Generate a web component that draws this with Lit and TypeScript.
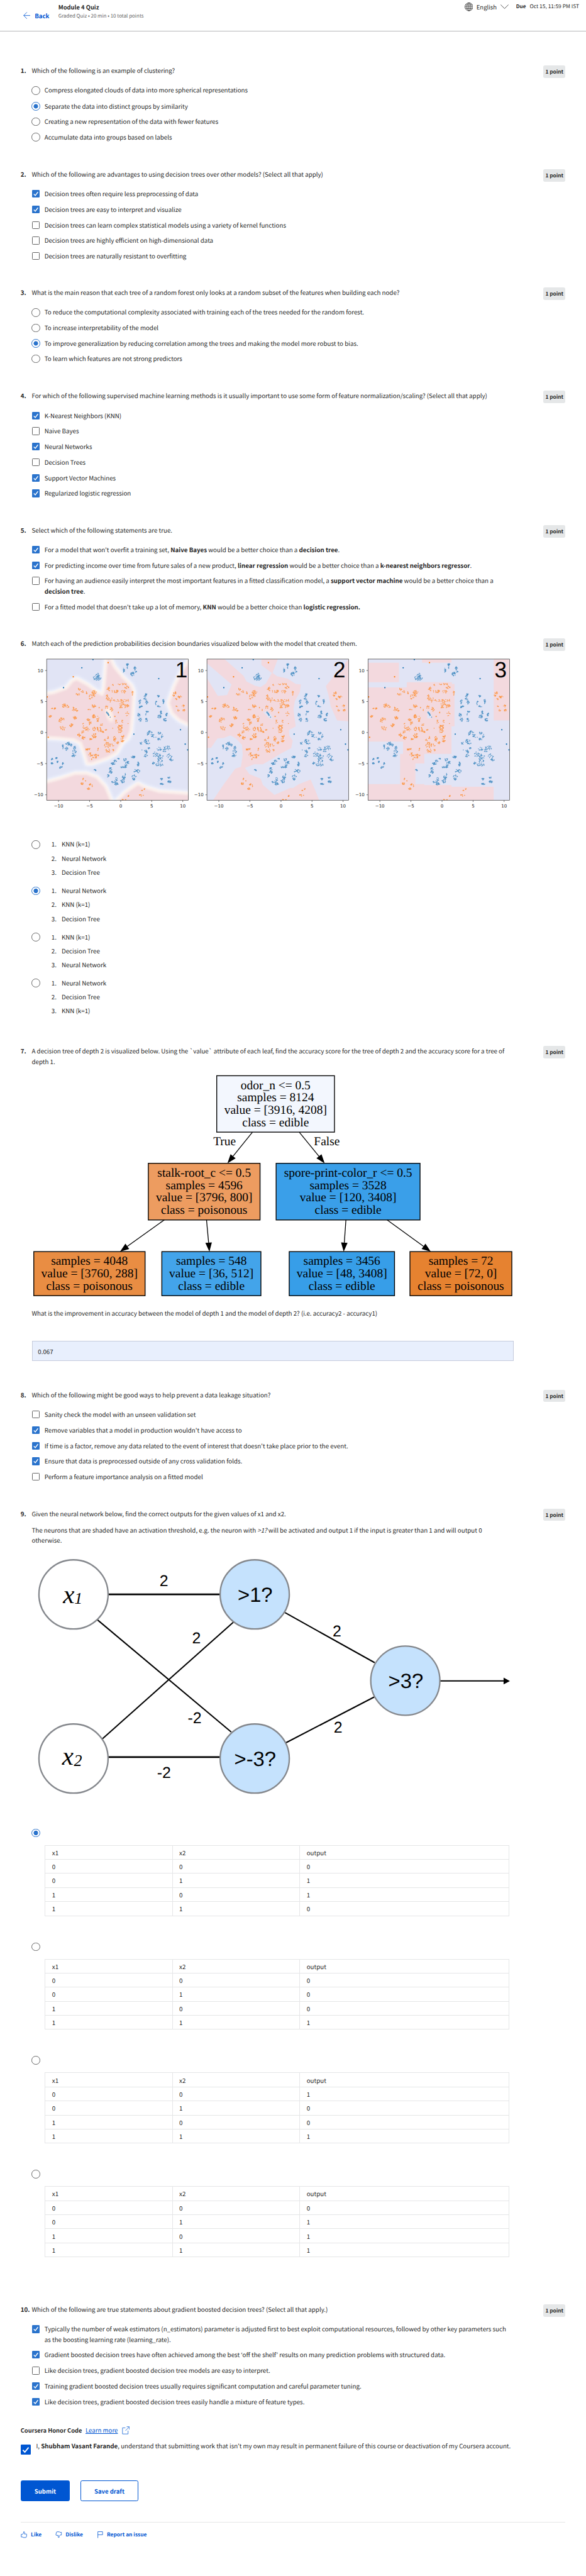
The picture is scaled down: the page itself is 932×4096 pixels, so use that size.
import { LitElement, html, svg, css, TemplateResult } from "lit";
import { customElement } from "lit/decorators.js";

type Cluster = [number, number, number, number, number];
type Body = string | TemplateResult;
interface Option { text: Body; on?: boolean; h?: number }
interface Question { n: number; title: Body; h: number; kind?: "radio" | "check"; options?: Option[]; body?: TemplateResult }

// Scatter clusters: centre x, centre y, radius x, radius y, number of dots.
const ORANGE: Cluster[] = [
  [240,222,8,8,8],[262,238,9,8,7],[232,258,16,8,9],[293,245,5,10,5],[345,245,20,13,22],[330,270,22,14,16],[313,288,8,5,4],
  [448,222,14,16,14],[475,195,4,8,3],[490,235,22,16,18],[550,240,18,10,14],[545,188,35,6,13],[570,208,18,12,14],[612,252,6,17,10],
  [437,280,14,18,16],[460,297,14,16,10],[500,300,25,10,8],[538,315,22,26,26],[570,300,18,10,8],[570,345,18,16,18],[535,347,18,12,10],
  [135,338,14,14,18],[160,343,8,12,8],[58,357,18,6,16],[205,360,18,14,14],[220,372,14,5,8],[340,340,16,11,20],[377,350,5,4,3],
  [310,365,10,6,4],[432,348,12,11,11],[466,360,11,18,12],[401,367,5,8,3],[37,412,10,7,13],[118,435,18,12,18],[103,450,10,10,6],
  [208,422,15,10,20],[342,412,11,13,22],[370,430,9,24,17],[303,435,11,9,11],[318,460,10,15,11],[270,475,7,18,6],[185,475,14,11,18],
  [125,492,20,18,15],[290,500,22,16,20],[262,518,12,13,9],[240,543,13,12,17],[270,562,12,11,15],[345,500,13,13,14],[380,500,17,22,22],
  [400,521,14,6,8],[425,508,8,7,7],[345,548,16,19,22],[310,573,21,6,14],[395,470,10,9,5],[514,390,4,11,3],[575,395,14,15,7],
  [487,413,6,3,3],[500,450,8,17,7],[540,445,5,15,5],[528,490,22,20,28],[580,462,2,2,1],[525,518,17,11,11],[476,497,2,2,1],
  [545,552,11,9,10],[542,578,13,15,13],[487,570,9,18,16],[508,597,9,9,10],[440,560,10,11,7],[420,577,7,9,5],[435,612,20,20,20],
  [465,615,18,15,12],[440,652,17,15,17],[478,645,5,12,5],[300,640,17,6,11],[292,646,9,5,7],[318,680,13,13,13],[350,690,20,20,20],
  [371,650,5,20,6],[375,690,6,7,5],[328,712,4,3,3],[900,262,6,15,11],[913,248,5,9,9],[942,276,14,8,15],[917,293,8,6,8],
  [920,342,6,3,5],[967,338,9,9,11],[971,370,9,7,11],[933,370,7,6,6],[267,850,4,6,9],[260,882,8,9,14],[284,864,2,2,3],
  [316,888,7,7,9],[305,919,9,7,14],[330,900,2,8,4],[584,971,4,8,14],[543,995,5,2,8],[564,995,3,2,6],[667,962,7,3,7],
  [679,930,4,3,6],[696,921,4,3,6],[688,965,2,2,3],[674,971,1,1,2],
];
const BLUE: Cluster[] = [
  [365,140,33,22,30],[372,124,12,18,14],[368,152,16,12,12],[578,52,9,10,18],[577,75,4,8,5],[550,90,8,14,17],[630,76,9,11,15],
  [632,100,10,8,7],[612,115,13,15,28],[706,262,9,9,15],[700,285,11,15,12],[712,316,9,13,15],[665,312,8,17,13],[670,345,13,12,18],
  [793,271,9,6,12],[778,318,7,14,11],[797,342,11,7,9],[828,308,6,16,14],[657,402,9,12,14],[715,380,9,6,12],[705,397,5,5,3],
  [668,435,13,13,17],[710,438,9,12,14],[812,388,7,15,13],[800,415,13,14,18],[852,400,7,12,13],[840,436,11,12,18],[738,522,14,11,14],
  [720,535,9,11,11],[752,545,11,11,14],[800,530,12,9,9],[820,552,9,14,9],[797,572,14,7,9],[770,560,8,8,2],[672,598,8,11,10],
  [710,587,16,15,20],[718,602,15,6,8],[727,633,7,8,10],[708,660,11,13,15],[705,688,13,10,13],[685,650,20,4,3],[800,640,18,12,15],
  [855,632,24,15,22],[775,680,20,20,19],[810,690,19,20,20],[830,655,18,12,9],[870,690,19,19,14],[885,714,14,12,14],[800,722,22,15,18],
  [760,740,9,11,12],[800,752,29,9,22],[163,603,18,13,24],[126,625,6,15,12],[150,640,10,14,15],[183,612,7,10,6],[209,635,10,14,14],
  [203,665,18,14,12],[200,687,16,8,18],[80,705,6,8,14],[50,712,8,6,14],[50,741,8,5,16],[88,731,5,7,13],[126,745,4,12,14],
  [115,765,10,5,9],[104,773,7,3,8],[514,708,6,6,7],[492,725,10,9,11],[476,743,14,8,24],[617,697,14,8,24],[560,715,11,9,12],
  [577,740,15,15,18],[550,768,20,7,24],[565,758,10,8,8],[652,745,7,15,22],[460,780,11,10,13],[460,802,13,12,17],[442,828,8,11,11],
  [650,800,16,14,18],[630,795,9,11,8],[622,830,18,8,9],[622,850,11,8,15],[547,840,15,14,18],[543,862,15,16,22],[562,820,3,8,5],
  [499,853,8,16,10],[480,870,17,8,16],[500,885,14,9,24],[815,851,9,6,12],[818,885,12,5,22],[866,840,9,5,9],[870,870,14,7,20],
  [434,386,5,5,9],[440,394,4,5,9],[447,403,4,5,8],[457,418,2,2,4],[348,786,4,3,6],[355,790,4,3,6],
];

// Deterministic scatter so that every panel shows the same sample.
function scatter(list: Cluster[], seed: number): string {
  let s = seed;
  const rnd = () => ((s = (s * 1664525 + 1013904223) >>> 0) / 4294967296);
  let d = "";
  for (const [cx, cy, rx, ry, n] of list)
    for (let i = 0; i < n; i++) {
      const a = rnd() * Math.PI * 2, r = Math.sqrt(rnd());
      d += `M${(cx + Math.cos(a) * r * rx).toFixed(1)} ${(cy + Math.sin(a) * r * ry).toFixed(1)}h0`;
    }
  return d;
}
const dots = (list: number[][]) => list.map(([x, y]) => `M${x} ${y}h0`).join("");

const NN_MAIN = "M-40 262L60 248 150 215 190 165 222 150 300 192 360 238 400 258 410 240 418 150 426 60 434 -30L440 -30 485 65 545 138 604 195 622 240 612 400 600 520 578 568 540 596 500 668 440 703 330 742 296 742 278 680 250 600 200 575 100 565 -40 558Z";
const NN_BL = "M-40 885L100 848 210 812 290 810 365 840 425 905 485 1050 -40 1050Z";
const NN_BR = "M490 1050L505 1000 560 945 650 882 700 908 800 938 1050 955 1050 1050Z";
const NN_R = "M1050 -30L1000 30 955 100 905 200 864 320 890 390 940 438 1050 490Z";
const NN = `${NN_MAIN} ${NN_BL} ${NN_BR} ${NN_R}`;
const KNN = "M554 228L601 228 628 290 652 345 660 385 683 415 698 424 712 400 728 325 700 270 700 228 744 228 738 270 730 325 742 348 770 365 792 402 806 406 803 460 790 520 786 580 792 700 774 725 775 765 784 800 780 852 752 890 730 925 704 965 680 965 656 990 668 1035 698 1065 704 1110 735 1180 778 1130 785 1132 800 1105 832 1072 845 1150 855 1218 570 1218 598 1110 630 996 645 983 650 900 648 830 632 785 617 762 600 780 582 785 565 850 554 852 554 362 583 486 608 480 620 405 554 258Z M705 600L716 592 728 625 730 652 720 640Z M934 228L930 240 895 345 873 418 880 480 886 560 903 658 934 664Z";
const TREE = "M985 254H1068V390H985Z M1130 228H1209V254H1130Z M985 427H1089V390H1210V402H1217V700H1209V893H1136V960H1112V1104H1136V1111H1209V1123H1322V1218H985V1104H1071V893H1079V807H985Z M1144 594H1152V618H1156V643H1144Z M1322 228H1365V658H1322Z";

const TICKS_X: [string, number][] = [["−10", 95], ["−5", 312], ["0", 530], ["5", 747], ["10", 964]];
const TICKS_Y: [string, number][] = [["10", 92], ["5", 309], ["0", 526], ["−5", 743], ["−10", 961]];

function panel(dx: number, label: string, labelX: number, field: TemplateResult) {
  return svg`<g transform="translate(${105 + dx} 1532) scale(.33333)">
    <g clip-path="url(#frame)">
      <rect x="12" y="12" width="991" height="988" fill="#e1e4f5"></rect>
      ${field}
      <use href="#pts"></use>
    </g>
    <rect x="12" y="12" width="991" height="988" fill="none" stroke="#333" stroke-width="3"></rect>
    ${TICKS_X.map(([t, x]) => svg`<path d="M${x} 1000v11" stroke="#333" stroke-width="3"></path><text class="tick" x=${x} y="1049" text-anchor="middle">${t}</text>`)}
    ${TICKS_Y.map(([t, y]) => svg`<path d="M12 ${y}h-11" stroke="#333" stroke-width="3"></path><text class="tick" x="-12" y=${y + 11} text-anchor="end">${t}</text>`)}
    <text class="digit" x=${labelX} y="140" text-anchor="middle">${label}</text>
  </g>`;
}

const boundaries = html`<svg class="fig plots" viewBox="75 1517 1123 375">
  <defs>
    <clipPath id="frame"><rect x="12" y="12" width="991" height="988"></rect></clipPath>
    <filter id="b1" x="-10%" y="-10%" width="120%" height="120%"><feGaussianBlur stdDeviation="12"></feGaussianBlur></filter>
    <filter id="b2" x="-10%" y="-10%" width="120%" height="120%"><feGaussianBlur stdDeviation="8"></feGaussianBlur></filter>
    <g id="pts" fill="none" stroke-linecap="round">
      <path d=${scatter(ORANGE, 7)} stroke="#ff7f0e" stroke-opacity=".75" stroke-width="6.4"></path>
      <path d=${scatter(BLUE, 11)} stroke="#1f77b4" stroke-opacity=".75" stroke-width="6.4"></path>
      <path d=${dots([[442,37],[198,136],[16,277],[23,559]])} stroke="#ff7f0e" stroke-width="10"></path>
      <path d=${dots([[336,16],[258,73],[130,212],[796,149],[948,506],[622,537],[981,607],[998,647]])} stroke="#1f77b4" stroke-width="10"></path>
    </g>
  </defs>
  ${panel(0, "1", 954, svg`
    <path d=${NN} fill="#f6f8ff" stroke="#f3f7ff" stroke-width="36" filter="url(#b1)"></path>
    <path d=${NN} fill="#fdf1ec" stroke="#fdfaf8" stroke-width="10" filter="url(#b2)"></path>
    <path d=${NN} fill="#f3d9de" stroke="#fbf0ec" stroke-width="20" filter="url(#b2)"></path>
    <ellipse cx="452" cy="402" rx="22" ry="52" fill="#fff3ea" filter="url(#b1)" transform="rotate(-18 452 402)"></ellipse>`)}
  ${panel(373.7, "2", 938, svg`<path transform="translate(12 12) scale(2.608 .998) translate(-554 -228)" d=${KNN} fill="#f3d9de" fill-rule="evenodd"></path>`)}
  ${panel(749.2, "3", 940, svg`<path transform="translate(12 12) scale(2.608 .998) translate(-985 -228)" d=${TREE} fill="#f3d9de" fill-rule="evenodd"></path>`)}
</svg>`;

interface Node { x: number; y: number; w: number; h: number; fill: string; lines: string[] }
const NODES: Node[] = [
  { x: 505.5, y: 2508, w: 274.5, h: 131.5, fill: "#f3f7fe", lines: ["odor_n <= 0.5", "samples = 8124", "value = [3916, 4208]", "class = edible"] },
  { x: 346, y: 2712.2, w: 260.5, h: 132, fill: "#ed9c60", lines: ["stalk-root_c <= 0.5", "samples = 4596", "value = [3796, 800]", "class = poisonous"] },
  { x: 644, y: 2712.2, w: 335.5, h: 132, fill: "#3a9fe9", lines: ["spore-print-color_r <= 0.5", "samples = 3528", "value = [120, 3408]", "class = edible"] },
  { x: 79, y: 2918, w: 259.5, h: 102.7, fill: "#e98d43", lines: ["samples = 4048", "value = [3760, 288]", "class = poisonous"] },
  { x: 377.5, y: 2918, w: 231, h: 102.7, fill: "#43a4ea", lines: ["samples = 548", "value = [36, 512]", "class = edible"] },
  { x: 674.5, y: 2918, w: 245.5, h: 102.7, fill: "#379ee8", lines: ["samples = 3456", "value = [48, 3408]", "class = edible"] },
  { x: 956, y: 2918, w: 237.5, h: 102.7, fill: "#e68230", lines: ["samples = 72", "value = [72, 0]", "class = poisonous"] },
];
const EDGES = [
  [588.9, 2639.5, 530.5, 2712], [697.8, 2639.5, 757.2, 2712], [383.3, 2844, 280, 2918],
  [481.7, 2844, 488.5, 2918], [806.7, 2844, 801.5, 2918], [902.8, 2844, 1004.6, 2918],
];
function edge([x1, y1, x2, y2]: number[]) {
  const l = Math.hypot(x2 - x1, y2 - y1), ux = (x2 - x1) / l, uy = (y2 - y1) / l;
  const bx = x2 - ux * 21, by = y2 - uy * 21;
  return svg`<path d="M${x1} ${y1}L${bx} ${by}" stroke="#000" stroke-width="1.9"></path>
    <path d="M${x2} ${y2}L${bx - uy * 7.6} ${by + ux * 7.6} ${bx + uy * 7.6} ${by - ux * 7.6}Z"></path>`;
}
const decisionTree = html`<svg class="fig tree" viewBox="75 2500 1123 530">
  ${NODES.map(n => svg`<rect x=${n.x} y=${n.y} width=${n.w} height=${n.h} fill=${n.fill} stroke="#000" stroke-width="2"></rect>
    ${n.lines.map((t, i) => svg`<text x=${n.x + n.w / 2} y=${n.y + 31 + i * 28.8} text-anchor="middle">${t}</text>`)}`)}
  ${EDGES.map(edge)}
  <text x="523.8" y="2670.4" text-anchor="middle">True</text>
  <text x="762.3" y="2670.4" text-anchor="middle">False</text>
</svg>`;

const NEURONS: [number, number, string, string][] = [
  [171.6, 3715.6, "#fff", ""], [171.6, 4098.2, "#fff", ""],
  [594.1, 3715.6, "#c5e2fd", ">1?"], [594.1, 4098.2, "#c5e2fd", ">-3?"], [945.2, 3916.6, "#c5e2fd", ">3?"],
];
const WIRES = ["M252.5 3715.4H513", "M252.5 4094.7H513", "M226.5 3774.1L539.3 4036.3", "M238.7 4052.4L544.5 3780.1", "M664.7 3758.1L873.8 3874.7", "M666.4 4061.6L872.9 3954.6", "M1026 3917.3H1176"];
const WEIGHTS: [string, number, number][] = [["2", 382.4, 3696.5], ["2", 458.2, 3830.2], ["2", 785.8, 3814], ["-2", 453.9, 4015.2], ["2", 788.4, 4037.7], ["-2", 382.4, 4143.8]];
const network = html`<svg class="fig net" viewBox="75 3620 1123 570">
  ${WIRES.map((d, i) => svg`<path d=${d} stroke="#000" stroke-width=${i < 2 ? 3.8 : 3}></path>`)}
  <path d="M1189 3917.4L1174.3 3909.6V3925.2Z"></path>
  ${NEURONS.map(([x, y, f, t]) => svg`<circle cx=${x} cy=${y} r="80.6" fill=${f} stroke="#85888d" stroke-width="3.4"></circle>
    ${t ? svg`<text class="gate" x=${x + 1} y=${y + 17.8} text-anchor="middle">${t}</text>` : ""}`)}
  ${WEIGHTS.map(([t, x, y]) => svg`<text class="weight" x=${x} y=${y} text-anchor="middle">${t}</text>`)}
  <text class="var" x="147" y="3735.6">x</text><text class="sub" x="173.5" y="3738">1</text>
  <text class="var" x="145" y="4113">x</text><text class="sub" x="172.5" y="4115.8">2</text>
</svg>`;

const trio = (...names: string[]) => html`<div class="trio">${names.map((t, i) => html`<div><span class="ord">${i + 1}.</span>${t}</div>`)}</div>`;
const [K, N, D] = ["KNN (k=1)", "Neural Network", "Decision Tree"];

const OUTPUTS = [[0, 1, 1, 0], [0, 0, 0, 1], [1, 0, 0, 1], [0, 1, 1, 1]];
const truthTables = html`<div class="tables">${OUTPUTS.map((out, k) => html`
  <div class="tblock"><i class="radio ${k === 0 ? "on" : ""}"></i>
    <div class="table">${["x1", "x2", "output"].map(t => html`<span>${t}</span>`)}
      ${out.map((o, r) => html`<span>${r >> 1}</span><span>${r & 1}</span><span>${o}</span>`)}</div>
  </div>`)}</div>`;

const QUESTIONS: Question[] = [
  { n: 1, h: 241.2, kind: "radio", title: "Which of the following is an example of clustering?", options: [
    { text: "Compress elongated clouds of data into more spherical representations", h: 37 },
    { text: "Separate the data into distinct groups by similarity", on: true },
    { text: "Creating a new representation of the data with fewer features" },
    { text: "Accumulate data into groups based on labels" }] },
  { n: 2, h: 276.3, kind: "check", title: "Which of the following are advantages to using decision trees over other models? (Select all that apply)", options: [
    { text: "Decision trees often require less preprocessing of data", on: true, h: 37 },
    { text: "Decision trees are easy to interpret and visualize", on: true },
    { text: "Decision trees can learn complex statistical models using a variety of kernel functions" },
    { text: "Decision trees are highly efficient on high-dimensional data", h: 35.6 },
    { text: "Decision trees are naturally resistant to overfitting" }] },
  { n: 3, h: 240.7, kind: "radio", title: "What is the main reason that each tree of a random forest only looks at a random subset of the features when building each node?", options: [
    { text: "To reduce the computational complexity associated with training each of the trees needed for the random forest." },
    { text: "To increase interpretability of the model" },
    { text: "To improve generalization by reducing correlation among the trees and making the model more robust to bias.", on: true },
    { text: "To learn which features are not strong predictors" }] },
  { n: 4, h: 312.8, kind: "check", title: "For which of the following supervised machine learning methods is it usually important to use some form of feature normalization/scaling? (Select all that apply)", options: [
    { text: "K-Nearest Neighbors (KNN)", on: true }, { text: "Naive Bayes", h: 35.2 }, { text: "Neural Networks", on: true },
    { text: "Decision Trees", h: 36.9 }, { text: "Support Vector Machines", on: true }, { text: "Regularized logistic regression", on: true }] },
  { n: 5, h: 264.4, kind: "check", title: "Select which of the following statements are true.", options: [
    { text: html`For a model that won’t overfit a training set, <b>Naive Bayes</b> would be a better choice than a <b>decision tree</b>.`, on: true },
    { text: html`For predicting income over time from future sales of a new product, <b>linear regression</b> would be a better choice than a <b>k-nearest neighbors regressor</b>.`, on: true },
    { text: html`For having an audience easily interpret the most important features in a fitted classification model, a <b>support vector machine</b> would be a better choice than a<br><b>decision tree</b>.`, h: 61 },
    { text: html`For a fitted model that doesn’t take up a lot of memory, <b>KNN</b> would be a better choice than <b>logistic regression.</b>` }] },
  { n: 6, h: 949.8, kind: "radio", title: "Match each of the prediction probabilities decision boundaries visualized below with the model that created them.", body: boundaries, options: [
    { text: trio(K, N, D), h: 108.2 }, { text: trio(N, K, D), on: true, h: 108 }, { text: trio(K, D, N), h: 107 }, { text: trio(N, D, K) }] },
  { n: 7, h: 801, title: html`A decision tree of depth 2 is visualized below. Using the \`value\` attribute of each leaf, find the accuracy score for the tree of depth 2 and the accuracy score for a tree of<br>depth 1.`,
    body: html`${decisionTree}<div class="ask">What is the improvement in accuracy between the model of depth 1 and the model of depth 2? (i.e. accuracy2 - accuracy1)</div><div class="input">0.067</div>` },
  { n: 8, h: 277, kind: "check", title: "Which of the following might be good ways to help prevent a data leakage situation?", options: [
    { text: "Sanity check the model with an unseen validation set", h: 37 },
    { text: "Remove variables that a model in production wouldn't have access to", on: true },
    { text: "If time is a factor, remove any data related to the event of interest that doesn't take place prior to the event.", on: true },
    { text: "Ensure that data is preprocessed outside of any cross validation folds.", on: true },
    { text: "Perform a feature importance analysis on a fitted model" }] },
  { n: 9, h: 1855, title: "Given the neural network below, find the correct outputs for the given values of x1 and x2.",
    body: html`<div class="para">The neurons that are shaded have an activation threshold, e.g. the neuron with <em>&gt;1?</em> will be activated and output 1 if the input is greater than 1 and will output 0<br>otherwise.</div>${network}${truthTables}` },
  { n: 10, h: 282, kind: "check", title: "Which of the following are true statements about gradient boosted decision trees? (Select all that apply.)", options: [
    { text: html`Typically the number of weak estimators (n_estimators) parameter is adjusted first to best exploit computational resources, followed by other key parameters such<br>as the boosting learning rate (learning_rate).`, on: true, h: 60 },
    { text: "Gradient boosted decision trees have often achieved among the best ‘off the shelf’ results on many prediction problems with structured data.", on: true, h: 37 },
    { text: "Like decision trees, gradient boosted decision tree models are easy to interpret." },
    { text: "Training gradient boosted decision trees usually requires significant computation and careful parameter tuning.", on: true },
    { text: "Like decision trees, gradient boosted decision trees easily handle a mixture of feature types.", on: true }] },
];

const tick = html`<svg viewBox="0 0 18 18"><path d="M4.1 9.6l3.4 3.5 6.3-8.3" fill="none" stroke="#fff" stroke-width="2"></path></svg>`;
const thumb = (cls: string) => html`<svg class="fi ${cls}" viewBox="0 0 16 16"><path d="M1.2 7.3h3C6 5.6 6.9 3.5 7.1 1c1.9-.3 2.5 1.2 2.2 2.8L8.8 6.4h4.4c1.100 0 1.600.8 1.400 1.700l-1.200 5.500c-.2.8-.7 1.300-1.500 1.300H6.400L4.400 13.600H1.200z"></path></svg>`;

@customElement("app-root")
export class AppRoot extends LitElement {
  static styles = css`
    :host { display: block; width: 1366.2px; height: 6004px; overflow: hidden; zoom: .6822; background: #fff; color: #1f1f1f;
      font: 400 14.31px/24px "Noto Sans CJK KR", sans-serif; white-space: nowrap; text-rendering: geometricPrecision; }
    b { font-weight: 700; }
    svg { display: block; flex: none; }
    header { display: flex; align-items: flex-start; box-sizing: border-box; height: 73px; border-bottom: 1.4px solid #b5b6b8; padding: 0 16px 0 54px; }
    .back { display: flex; align-items: center; gap: 10px; width: 82px; margin-top: 25px; color: #0056d2; font-weight: 700; font-size: 14.15px; }
    .title { font-weight: 700; font-size: 13.72px; margin-top: 4.6px; }
    .meta { font-size: 11.64px; color: #636363; margin-top: -2.2px; }
    .right { display: flex; align-items: flex-start; margin-left: auto; }
    .lang { display: flex; align-items: center; font-size: 13.98px; margin-top: 4px; }
    .lang .globe { margin-right: 8px; }
    .lang .chev { margin-left: 9px; margin-right: 17px; margin-top: 1px; }
    .due { font-size: 12.4px; margin-top: 3.2px; }
    .due b { font-size: 11.9px; margin-right: 9px; }
    main { padding: 79.8px 48px 0; }
    .q { display: grid; grid-template-columns: 26px 1124px 1fr; align-items: start; }
    .num { font-weight: 700; }
    .point { justify-self: end; width: 51.6px; height: 29px; border-radius: 4px; background: #e5e7e8; font-weight: 700; font-size: 12.16px; line-height: 31px; text-align: center; }
    .opts { margin-top: 21.7px; }
    .opt { display: grid; grid-template-columns: 29.7px 1fr; min-height: 36.1px; align-items: start; }
    .radio { display: block; box-sizing: border-box; width: 20px; height: 20px; border: 2px solid #666; border-radius: 50%; margin-top: 2.2px; }
    .radio.on { border-color: #2a73cc; background: radial-gradient(circle, #2a73cc 4.9px, #fff 5.5px); }
    .check { display: block; box-sizing: border-box; width: 18px; height: 18px; margin: 3px 0 0 1px; border: 2px solid #666; border-radius: 2px; }
    .check.on { border: 0; background: #2a73cc; }
    .fig { width: 1123px; margin-left: 1px; }
    .plots { height: 375px; margin-top: 4.8px; }
    .plots + .opts { margin-top: 64.2px; }
    .tick { font: 31px "DejaVu Sans", sans-serif; fill: #222; }
    .digit { font: 154px "Liberation Sans", sans-serif; fill: #000; }
    .tree { height: 530px; margin-top: 14px; }
    .tree text { font: 28.5px "Liberation Serif", serif; fill: #000; }
    .net { height: 570px; margin-top: 17.1px; }
    .net text { fill: #000; }
    .gate { font: 48px "Liberation Sans", sans-serif; }
    .weight { font: 36.5px "Liberation Sans", sans-serif; }
    .var { font: italic 60px "Liberation Serif", serif; }
    .sub { font: italic 38px "Liberation Serif", serif; }
    .trio { display: grid; gap: 8.5px; padding-left: 16.3px; }
    .ord { display: inline-block; width: 23.7px; }
    .ask { margin-top: 18.9px; }
    .input { box-sizing: border-box; width: 1123px; height: 47.5px; margin: 52.5px 0 0 1px; padding: 0 12px; border: 1.2px solid #c5cbdc; background: #e8effd; line-height: 48px; font-size: 14.21px; }
    .para { margin-top: 14.9px; }
    em { font-style: italic; }
    .tables { margin-top: 72.2px; }
    .tblock { height: 265.2px; }
    .tblock .radio { margin: 0 0 18.2px; }
    .table { display: grid; grid-template-columns: 296.5px 297px 488.5px; grid-auto-rows: 32.82px; width: 1082px; margin-left: 30.5px; border: solid #e5e6e7; border-width: 1.4px 0 0 1.4px; }
    .table span { border: solid #e5e6e7; border-width: 0 1.4px 1.4px 0; padding: 4.5px 15.5px 0; line-height: 24px; }
    .honor { display: flex; align-items: center; font-weight: 700; font-size: 13.71px; }
    .honor a { font-weight: 400; font-size: 14.2px; color: #0056d2; text-decoration: underline; text-underline-offset: 2px; margin: 0 9px 0 8px; }
    .agree { display: flex; align-items: flex-start; gap: 12.3px; margin-top: 12.5px; height: 32px; }
    .agree .box { width: 24px; height: 24px; margin-top: 7.7px; border-radius: 2px; background: #0056d2; }
    .buttons { display: flex; gap: 24.5px; margin-top: 60.5px; }
    .btn { box-sizing: border-box; height: 48px; border: 1.4px solid #0056d2; border-radius: 4px; color: #0056d2; font-weight: 700; font-size: 14px; line-height: 47px; text-align: center; }
    .submit { width: 115px; background: #0056d2; color: #fff; }
    .save { width: 135px; }
    footer { display: flex; align-items: center; margin-top: 48px; border-top: 1.4px solid #e5e6e7; padding-top: 17px; font-weight: 700; font-size: 12.28px; color: #0056d2; }
    .fi { width: 15.5px; height: 15.5px; margin-right: 8.5px; }
    .fi path { fill: none; stroke: #0056d2; stroke-width: 1.2; }
    .flip { transform: rotate(180deg); }
    footer span { margin-right: 32px; }
  `;

  private option(o: Option, kind: string) {
    return html`<div class="opt" style="height:${o.h ?? 36.1}px">
      <i class="${kind} ${o.on ? "on" : ""}">${o.on && kind === "check" ? tick : ""}</i><div>${o.text}</div></div>`;
  }

  private question(q: Question) {
    return html`<section class="q" style="height:${q.h}px">
      <div class="num">${q.n}.</div>
      <div><div>${q.title}</div>${q.body ?? ""}
        ${q.options ? html`<div class="opts">${q.options.map(o => this.option(o, q.kind!))}</div>` : ""}</div>
      <div class="point">1 point</div>
    </section>`;
  }

  render() {
    return html`
      <header>
        <div class="back"><svg width="17" height="17" viewBox="0 0 17 17"><path d="M8.5 .7L1 8.3l7.5 7.6M1 8.3h15.8" fill="none" stroke="#0056d2" stroke-width="1.2"></path></svg>Back</div>
        <div><div class="title">Module 4 Quiz</div><div class="meta">Graded Quiz • 20 min • 10 total points</div></div>
        <div class="right">
          <div class="lang"><svg class="globe" width="20" height="20" viewBox="0 0 20 20"><g fill="none" stroke="#222" stroke-width="1.1"><circle cx="10" cy="10" r="9.3"></circle><ellipse cx="10" cy="10" rx="4.7" ry="9.3"></ellipse><path d="M10 .7v18.6M.7 10h18.6M2.2 5.8h15.6M2.2 14.2h15.6"></path></g></svg>English
            <svg class="chev" width="19" height="11" viewBox="0 0 19 11"><path d="M.5 .8l9 8.9 9-8.9" fill="none" stroke="#222" stroke-width="1.1"></path></svg></div>
          <div class="due"><b>Due</b>Oct 15, 11:59 PM IST</div>
        </div>
      </header>
      <main>
        ${QUESTIONS.map(q => this.question(q))}
        <div class="honor">Coursera Honor Code<a>Learn more</a>
          <svg width="18" height="19" viewBox="0 0 18 19"><path d="M8 3.5H1.2v14.3h13V10M11 1h6.2v6.5M17 1.2L8 10.4" fill="none" stroke="#0056d2" stroke-width="1.1"></path></svg></div>
        <div class="agree"><div class="box"><svg viewBox="0 0 24 24"><path d="M5 12.8l4.5 4.9 8.8-11" fill="none" stroke="#fff" stroke-width="2.7"></path></svg></div>
          <div>I, <b>Shubham Vasant Farande</b>, understand that submitting work that isn’t my own may result in permanent failure of this course or deactivation of my Coursera account.</div></div>
        <div class="buttons"><div class="btn submit">Submit</div><div class="btn save">Save draft</div></div>
        <footer>${thumb("")}<span>Like</span>${thumb("flip")}<span>Dislike</span>
          <svg class="fi" viewBox="0 0 16 16"><path d="M2.5 16V.8h11.3v7.4H2.5"></path></svg><span>Report an issue</span></footer>
      </main>`;
  }
}
